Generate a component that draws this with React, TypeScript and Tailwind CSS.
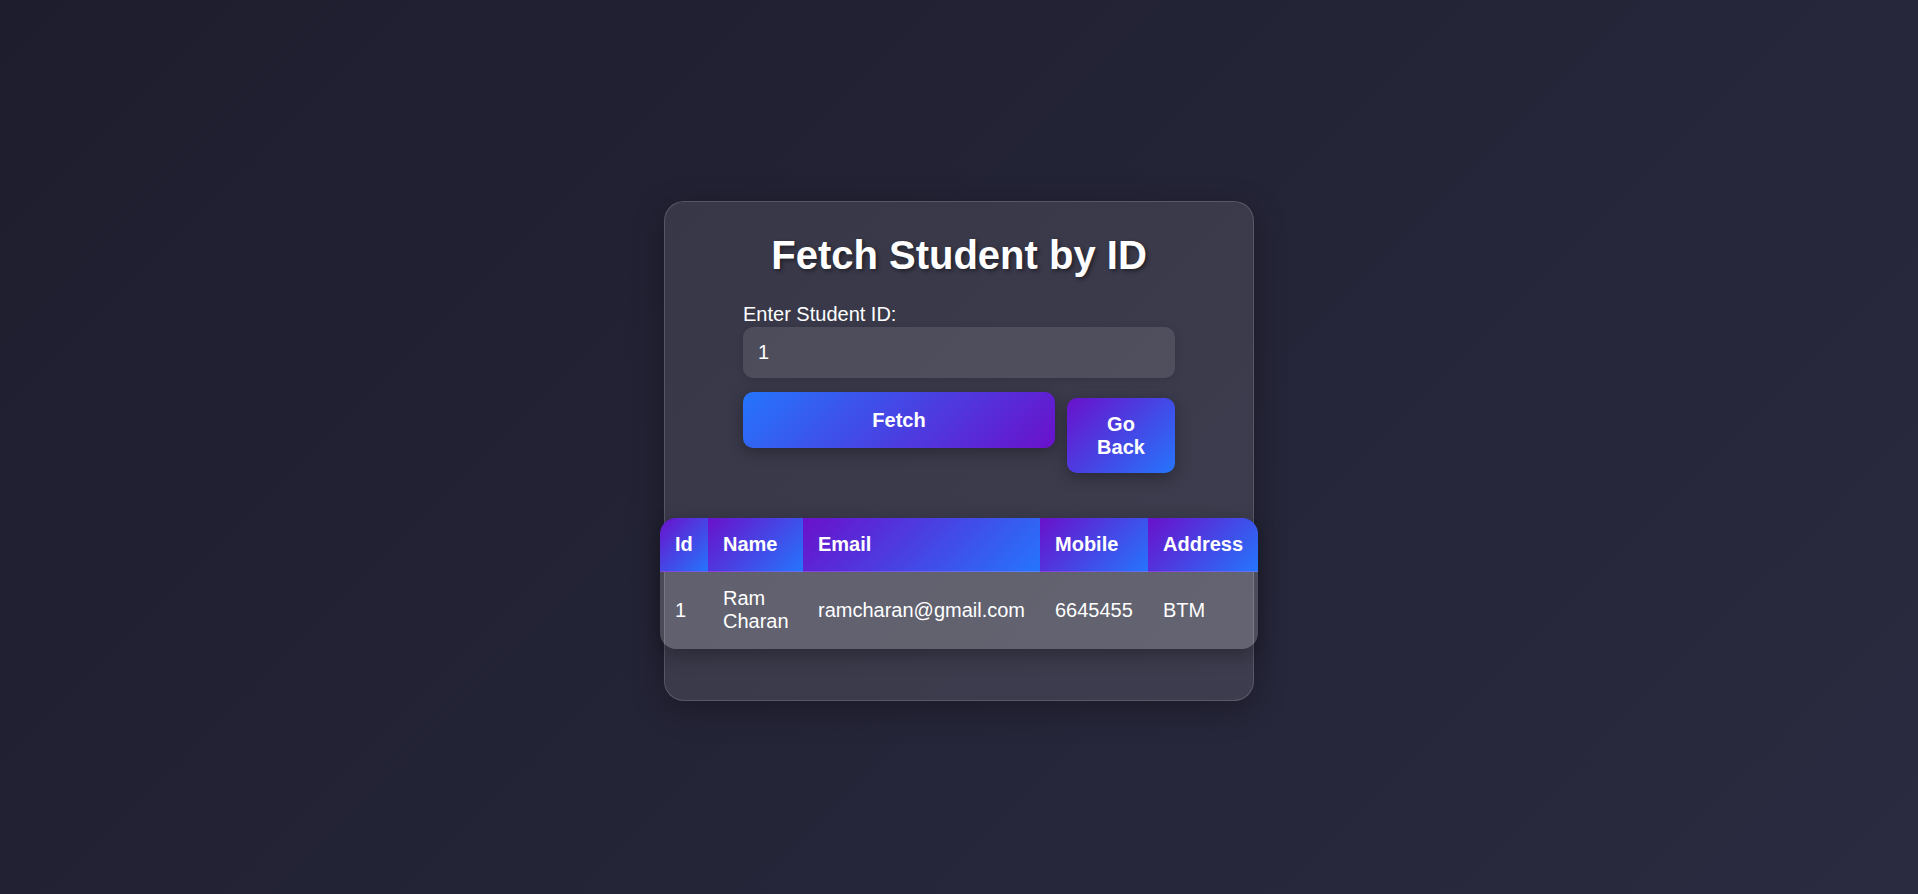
import React, { useState } from 'react';

type Student = { id: number; name: string; email: string; mobile: string; address: string };

const student: Student = { id: 1, name: 'Ram Charan', email: 'ramcharan@gmail.com', mobile: '6645455', address: 'BTM' };

const App: React.FC = () => {
    const [studentId, setStudentId] = useState('1');
    const [result, setResult] = useState<Student | null>(student);

    const handleFetch = () => {
        setResult(studentId === '1' ? student : null);
    };

    return (
        <div className="min-h-screen bg-[linear-gradient(135deg,#1e1d2e,#2a2b40)] font-['Liberation_Sans',Arial,sans-serif] text-white pt-[201px]">
            <div className="mx-auto w-[590px] h-[500px] flex flex-col items-center rounded-[20px] border border-white/15 bg-white/10 shadow-[0_8px_32px_rgba(0,0,0,0.3)] pt-[30px]">
                <h1 className="text-[40px] leading-[46px] font-bold [text-shadow:2px_2px_4px_rgba(0,0,0,0.45)]">Fetch Student by ID</h1>

                {/* Search form */}
                <div className="w-[432px] mt-[25px]">
                    <label className="block text-[20px] leading-[23px]">Enter Student ID:</label>
                    <input
                        className="mt-px w-full h-[51px] rounded-[10px] bg-white/10 pl-[15px] text-[20px] text-white outline-none shadow-[0_2px_8px_rgba(0,0,0,0.12)]"
                        value={studentId}
                        onChange={e => setStudentId(e.target.value)}
                    />
                    <div className="mt-[14px] flex items-start gap-[12px]">
                        <button
                            onClick={handleFetch}
                            className="w-[312px] h-[56px] rounded-[10px] bg-[linear-gradient(135deg,#2575fc,#6a11cb)] text-[20px] leading-[23px] font-bold shadow-[0_4px_15px_rgba(0,0,0,0.3)]"
                        >
                            Fetch
                        </button>
                        <button className="mt-[6px] w-[108px] h-[75px] px-[15px] rounded-[10px] bg-[linear-gradient(135deg,#6a11cb,#2575fc)] text-[20px] leading-[23px] font-bold text-center shadow-[0_4px_15px_rgba(0,0,0,0.3)]">
                            Go Back
                        </button>
                    </div>
                </div>

                {/* Result table */}
                {result && (
                    <div className="mt-[45px] w-[598px] shrink-0 rounded-[16px] overflow-hidden shadow-[0_6px_20px_rgba(0,0,0,0.3)]">
                        <table className="w-full table-fixed border-collapse text-left text-[20px] leading-[23px]">
                            <colgroup>
                                <col className="w-[48px]" />
                                <col className="w-[95px]" />
                                <col className="w-[237px]" />
                                <col className="w-[108px]" />
                                <col className="w-[110px]" />
                            </colgroup>
                            <thead>
                                <tr className="border-b border-white/20">
                                    <th className="p-[15px] font-bold bg-[linear-gradient(135deg,#6a11cb,#2575fc)]">Id</th>
                                    <th className="p-[15px] font-bold bg-[linear-gradient(135deg,#6a11cb,#2575fc)]">Name</th>
                                    <th className="p-[15px] font-bold bg-[linear-gradient(135deg,#6a11cb,#2575fc)]">Email</th>
                                    <th className="p-[15px] font-bold bg-[linear-gradient(135deg,#6a11cb,#2575fc)]">Mobile</th>
                                    <th className="p-[15px] font-bold bg-[linear-gradient(135deg,#6a11cb,#2575fc)]">Address</th>
                                </tr>
                            </thead>
                            <tbody>
                                <tr className="bg-white/20 border-b border-transparent">
                                    <td className="p-[15px] align-middle">{result.id}</td>
                                    <td className="p-[15px] align-middle">{result.name}</td>
                                    <td className="p-[15px] align-middle">{result.email}</td>
                                    <td className="p-[15px] align-middle">{result.mobile}</td>
                                    <td className="p-[15px] align-middle">{result.address}</td>
                                </tr>
                            </tbody>
                        </table>
                    </div>
                )}
            </div>
        </div>
    );
};

export default App;
